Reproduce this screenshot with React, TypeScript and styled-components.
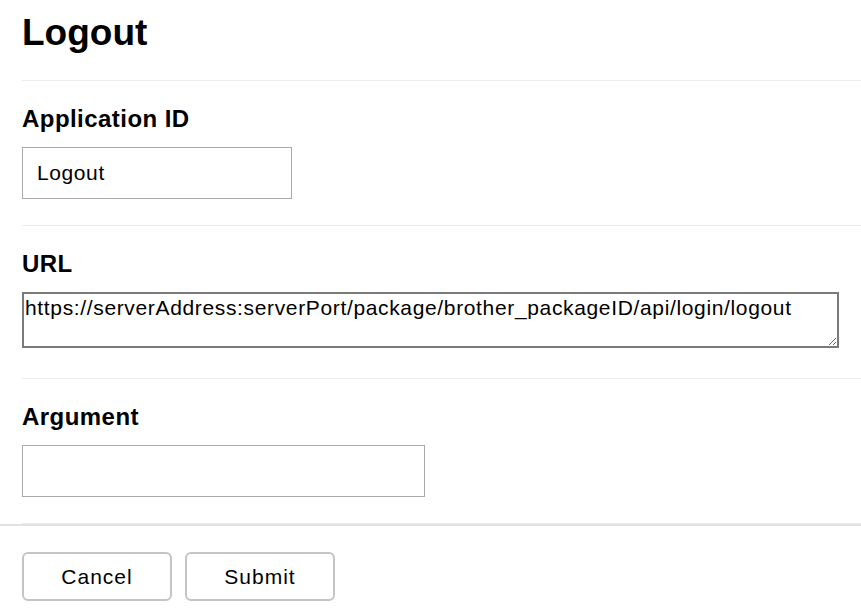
import React, { useState } from "react";
import styled, { createGlobalStyle } from "styled-components";

const GlobalStyle = createGlobalStyle`
  html, body {
    margin: 0;
    padding: 0;
    background: #ffffff;
  }
  body {
    font-family: "Liberation Sans", Arial, sans-serif;
    color: #000000;
  }
`;

const App = () => {
  const [appId, setAppId] = useState<string>("Logout");
  const [url, setUrl] = useState<string>(
    "https://serverAddress:serverPort/package/brother_packageID/api/login/logout"
  );
  const [arg, setArg] = useState<string>("");

  return (
    <Page>
      <GlobalStyle />
      <Header>
        <Title>Logout</Title>
      </Header>

      <Section>
        <Label>Application ID</Label>
        <TextInput
          $width={270}
          value={appId}
          onChange={(e) => setAppId(e.target.value)}
        />
      </Section>

      <Section $bottom={30}>
        <Label>URL</Label>
        <UrlArea value={url} onChange={(e) => setUrl(e.target.value)} />
      </Section>

      <Section>
        <Label>Argument</Label>
        <TextInput
          $width={403}
          value={arg}
          onChange={(e) => setArg(e.target.value)}
        />
      </Section>

      <Footer>
        <Button>Cancel</Button>
        <Button>Submit</Button>
      </Footer>
    </Page>
  );
};

export default App;

const Page = styled.div`
  width: 100%;
  min-height: 614px;
  display: flex;
  flex-direction: column;
`;

const Header = styled.div`
  margin-left: 22px;
  padding: 11px 0 25px;
  border-bottom: 1px solid #ececec;
`;

const Title = styled.h1`
  margin: 0;
  font-size: 37px;
  line-height: 44px;
  font-weight: bold;
`;

const Section = styled.div<{ $bottom?: number }>`
  margin-left: 22px;
  padding: 24px 0 ${(p) => p.$bottom ?? 26}px;
  border-bottom: 1px solid #ececec;
  display: flex;
  flex-direction: column;
  align-items: flex-start;
  gap: 14px;

  &:last-of-type {
    border-bottom: 1px solid #d4d4d4;
  }
`;

const Label = styled.label`
  font-size: 24px;
  line-height: 28px;
  font-weight: bold;
  letter-spacing: 0.45px;
`;

const TextInput = styled.input<{ $width: number }>`
  box-sizing: border-box;
  width: ${(p) => p.$width}px;
  height: 52px;
  margin: 0;
  padding: 0 14px;
  border: 1px solid #a9a9a9;
  border-radius: 0;
  font-family: "Liberation Sans", Arial, sans-serif;
  font-size: 21px;
  letter-spacing: 0.6px;
  color: #000000;
  outline: none;
`;

const UrlArea = styled.textarea`
  box-sizing: border-box;
  display: block;
  width: 817px;
  height: 56px;
  margin: 0;
  padding: 2px 1px;
  border: 2px solid #7a7a7a;
  border-radius: 0;
  font-family: "Liberation Sans", Arial, sans-serif;
  font-size: 21px;
  line-height: 24px;
  letter-spacing: 0.65px;
  color: #000000;
  outline: none;
  resize: both;
`;

const Footer = styled.div`
  padding: 26px 22px 0;
  border-top: 2px solid #e2e2e2;
  display: flex;
  gap: 13px;
`;

const Button = styled.button`
  box-sizing: border-box;
  width: 150px;
  height: 49px;
  background: #ffffff;
  border: 2px solid #c4c4c4;
  border-radius: 6px;
  font-family: "Liberation Sans", Arial, sans-serif;
  font-size: 21px;
  letter-spacing: 1px;
  color: #000000;
  cursor: pointer;
`;
